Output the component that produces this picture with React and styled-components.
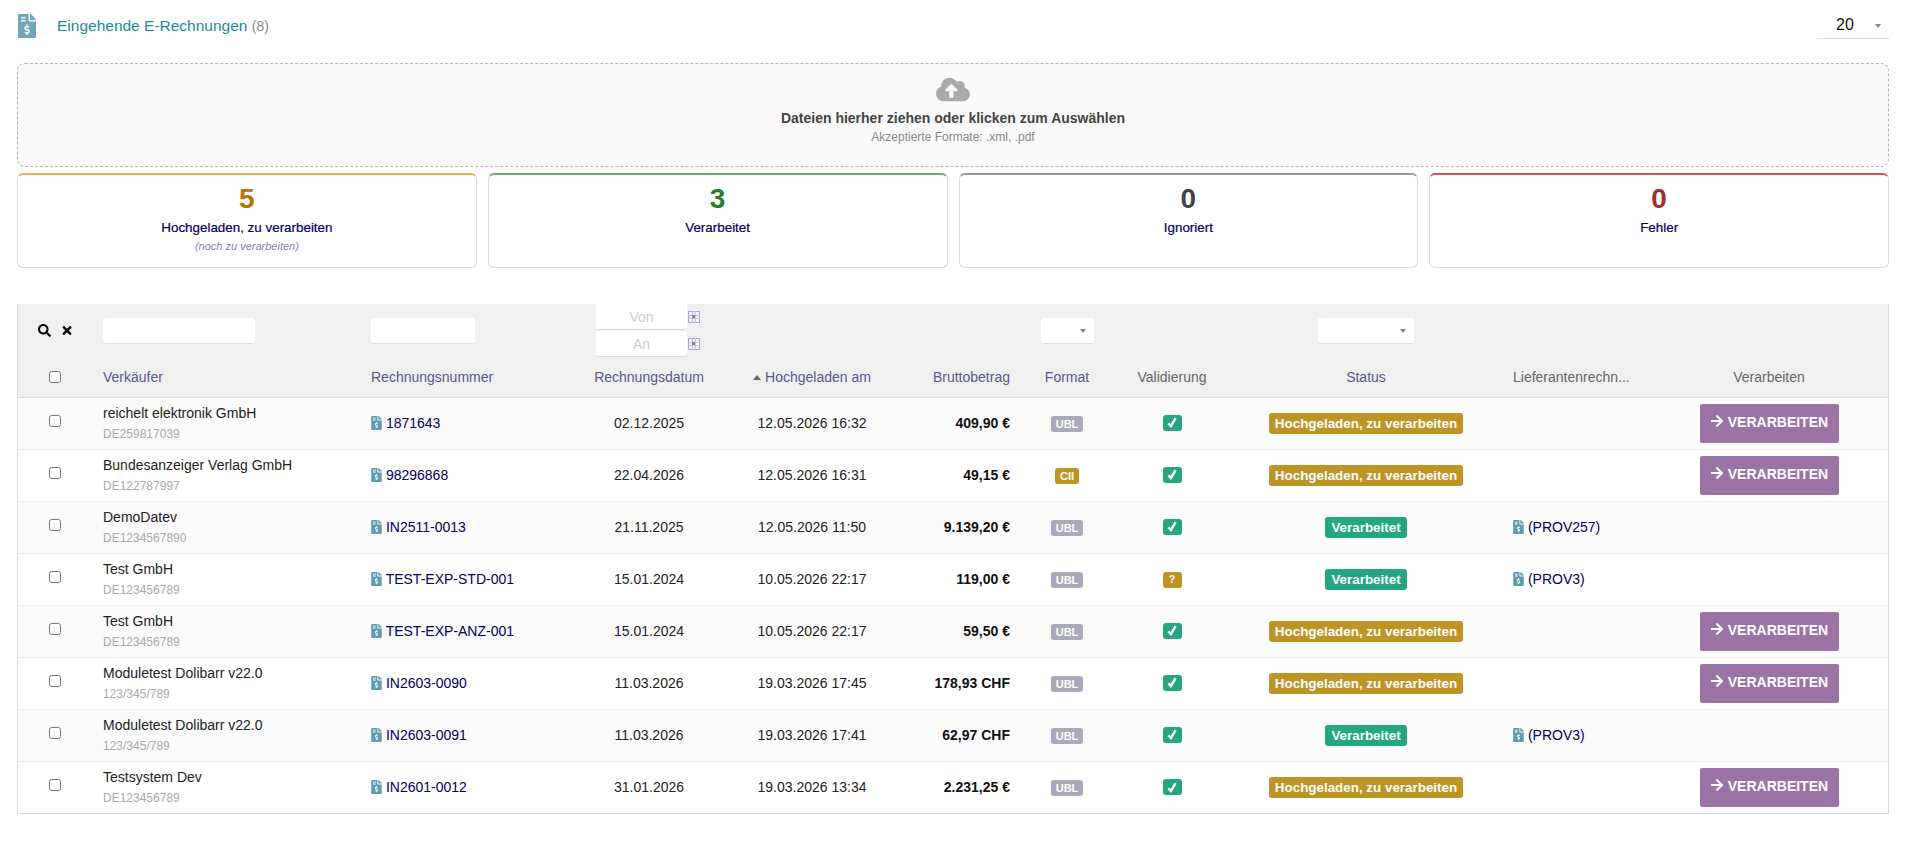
import React from 'react'
import styled, { createGlobalStyle } from 'styled-components'
import { FaFileInvoiceDollar, FaSearch, FaTimes, FaCloudUploadAlt, FaArrowRight } from 'react-icons/fa'

const GlobalStyle = createGlobalStyle`
    html, body {
        margin: 0;
        background: #fff;
        font-family: "Liberation Sans", Arial, sans-serif;
        font-size: 14px;
        color: #222;
    }
`

const columns = [74, 269, 225, 126, 200, 108, 94, 116, 272, 148, 238]

const invoices = [
    { seller: 'reichelt elektronik GmbH', vat: 'DE259817039', ref: '1871643', date: '02.12.2025', uploaded: '12.05.2026 16:32', amount: '409,90 €', format: 'UBL', valid: true, done: false },
    { seller: 'Bundesanzeiger Verlag GmbH', vat: 'DE122787997', ref: '98296868', date: '22.04.2026', uploaded: '12.05.2026 16:31', amount: '49,15 €', format: 'CII', valid: true, done: false },
    { seller: 'DemoDatev', vat: 'DE1234567890', ref: 'IN2511-0013', date: '21.11.2025', uploaded: '12.05.2026 11:50', amount: '9.139,20 €', format: 'UBL', valid: true, done: true, supplier: '(PROV257)' },
    { seller: 'Test GmbH', vat: 'DE123456789', ref: 'TEST-EXP-STD-001', date: '15.01.2024', uploaded: '10.05.2026 22:17', amount: '119,00 €', format: 'UBL', valid: false, done: true, supplier: '(PROV3)' },
    { seller: 'Test GmbH', vat: 'DE123456789', ref: 'TEST-EXP-ANZ-001', date: '15.01.2024', uploaded: '10.05.2026 22:17', amount: '59,50 €', format: 'UBL', valid: true, done: false },
    { seller: 'Moduletest Dolibarr v22.0', vat: '123/345/789', ref: 'IN2603-0090', date: '11.03.2026', uploaded: '19.03.2026 17:45', amount: '178,93 CHF', format: 'UBL', valid: true, done: false },
    { seller: 'Moduletest Dolibarr v22.0', vat: '123/345/789', ref: 'IN2603-0091', date: '11.03.2026', uploaded: '19.03.2026 17:41', amount: '62,97 CHF', format: 'UBL', valid: true, done: true, supplier: '(PROV3)' },
    { seller: 'Testsystem Dev', vat: 'DE123456789', ref: 'IN2601-0012', date: '31.01.2026', uploaded: '19.03.2026 13:34', amount: '2.231,25 €', format: 'UBL', valid: true, done: false },
]

const stats = [
    { value: 5, label: 'Hochgeladen, zu verarbeiten', note: '(noch zu verarbeiten)', edge: '#f0ad4e', color: '#b37400' },
    { value: 3, label: 'Verarbeitet', edge: '#5cb85c', color: '#2a7d2e' },
    { value: 0, label: 'Ignoriert', edge: '#999', color: '#444' },
    { value: 0, label: 'Fehler', edge: '#d9534f', color: '#a02c2c' },
]

function CalendarIcon() {
    return (
        <CalendarSvg viewBox="0 0 12 12">
            <rect x="0.5" y="0.5" width="11" height="11" fill="#f2f2f2" stroke="#a3a3e0" />
            <path d="M0 4.5h12M0 7.5h12M4.5 0v12M7.5 0v12" stroke="#c8c8c8" strokeWidth="1" />
            <rect x="4" y="4" width="3" height="3" fill="#a868bb" />
        </CalendarSvg>
    )
}

function CheckMark() {
    return (
        <CheckSvg viewBox="0 0 10 11">
            <path d="M1.4 6.4 L3.9 9 L8.6 1.2" fill="none" stroke="#fff" strokeWidth="2.4" />
        </CheckSvg>
    )
}

function Row({ item }) {
    return (
        <tr>
            <CheckCell><input type="checkbox" /></CheckCell>
            <Cell $pad="0 0 0 11px">
                <SellerName>{item.seller}</SellerName>
                <SellerVat>{item.vat}</SellerVat>
            </Cell>
            <Cell $pad="0 0 0 10px">
                <RefLink><DocIcon /> {item.ref}</RefLink>
            </Cell>
            <Cell $align="center">{item.date}</Cell>
            <Cell $align="center">{item.uploaded}</Cell>
            <Cell $align="right" $pad="0 10px 0 0"><Amount>{item.amount}</Amount></Cell>
            <Cell $align="center"><FormatBadge $format={item.format}>{item.format}</FormatBadge></Cell>
            <Cell $align="center">
                <CheckBadge $valid={item.valid}>{item.valid ? <CheckMark /> : '?'}</CheckBadge>
            </Cell>
            <Cell $align="center">
                <StatusBadge $done={item.done}>{item.done ? 'Verarbeitet' : 'Hochgeladen, zu verarbeiten'}</StatusBadge>
            </Cell>
            <Cell $pad="0 0 0 11px">
                {item.supplier && <RefLink><DocIcon /> {item.supplier}</RefLink>}
            </Cell>
            <Cell $align="center">
                {!item.done && <ProcessButton><FaArrowRight /> VERARBEITEN</ProcessButton>}
            </Cell>
        </tr>
    )
}

export default function App() {
    return (
        <Page>
            <GlobalStyle />
            <TitleBar>
                <TitleLeft>
                    <TitleIcon />
                    <Title>Eingehende E-Rechnungen <Count>(8)</Count></Title>
                </TitleLeft>
                <PageSize>20<Caret /></PageSize>
            </TitleBar>

            <DropZone>
                <CloudIcon />
                <DropTitle>Dateien hierher ziehen oder klicken zum Auswählen</DropTitle>
                <DropHint>Akzeptierte Formate: .xml, .pdf</DropHint>
            </DropZone>

            <StatGrid>
                {stats.map(s => (
                    <StatCard key={s.label} $edge={s.edge}>
                        <StatValue $color={s.color}>{s.value}</StatValue>
                        <StatLabel>{s.label}</StatLabel>
                        {s.note && <StatNote>{s.note}</StatNote>}
                    </StatCard>
                ))}
            </StatGrid>

            <TableWrap>
                <Table>
                    <colgroup>
                        {columns.map((w, i) => <Col key={i} $w={w} />)}
                    </colgroup>
                    <thead>
                        <FilterRow>
                            <th><SearchTools><FaSearch /><FaTimes /></SearchTools></th>
                            <FilterCell $pad="0 0 0 11px"><FilterInput $w={152} /></FilterCell>
                            <FilterCell $pad="0 0 0 10px"><FilterInput $w={104} /></FilterCell>
                            <FilterCell $pad="0 0 0 10px">
                                <DateStack>
                                    <DateLine><DateInput placeholder="Von" /><CalendarIcon /></DateLine>
                                    <DateLine><DateInput placeholder="An" /><CalendarIcon /></DateLine>
                                </DateStack>
                            </FilterCell>
                            <th />
                            <th />
                            <FilterCell><SelectBox $w={53}><Caret /></SelectBox></FilterCell>
                            <th />
                            <FilterCell><SelectBox $w={96}><Caret /></SelectBox></FilterCell>
                            <th />
                            <th />
                        </FilterRow>
                        <LabelRow>
                            <LabelCell $align="center"><input type="checkbox" /></LabelCell>
                            <LabelCell $pad="0 0 0 11px">Verkäufer</LabelCell>
                            <LabelCell $pad="0 0 0 10px">Rechnungsnummer</LabelCell>
                            <LabelCell $align="center">Rechnungsdatum</LabelCell>
                            <LabelCell $align="center"><SortArrow />Hochgeladen am</LabelCell>
                            <LabelCell $align="right" $pad="0 10px 0 0">Bruttobetrag</LabelCell>
                            <LabelCell $align="center">Format</LabelCell>
                            <LabelCell $align="center" $muted>Validierung</LabelCell>
                            <LabelCell $align="center">Status</LabelCell>
                            <LabelCell $pad="0 0 0 11px" $muted>Lieferantenrechn...</LabelCell>
                            <LabelCell $align="center" $muted>Verarbeiten</LabelCell>
                        </LabelRow>
                    </thead>
                    <Body>
                        {invoices.map(item => <Row key={item.ref} item={item} />)}
                    </Body>
                </Table>
            </TableWrap>
        </Page>
    )
}

const Page = styled.div`
    padding: 14px 20px 0 17px;
`
const TitleBar = styled.div`
    display: flex;
    justify-content: space-between;
    align-items: flex-start;
    height: 49px;
`
const TitleLeft = styled.div`
    display: flex;
    align-items: center;
    height: 24px;
`
const TitleIcon = styled(FaFileInvoiceDollar)`
    width: 18px;
    height: 24px;
    color: #6fa7b9;
    margin: 0 21px 0 1px;
`
const Title = styled.div`
    font-size: 15.5px;
    color: #1d8a98;
`
const Count = styled.span`
    color: #888;
    font-size: 14px;
`
const PageSize = styled.div`
    position: relative;
    box-sizing: border-box;
    width: 72px;
    height: 25px;
    padding: 2px 0 0 19px;
    font-size: 16px;
    color: #111;
    border-bottom: 1px solid #ddd;
    & > span { top: 10px; }
`
const Caret = styled.span`
    position: absolute;
    right: 8px;
    top: 11px;
    width: 0;
    height: 0;
    border-left: 3px solid transparent;
    border-right: 3px solid transparent;
    border-top: 4px solid #888;
`
const DropZone = styled.div`
    box-sizing: border-box;
    height: 104px;
    display: flex;
    flex-direction: column;
    align-items: center;
    background: #fafafa;
    border: 1px dashed #b5b5b5;
    border-radius: 8px;
    padding-top: 12px;
`
const CloudIcon = styled(FaCloudUploadAlt)`
    width: 34px;
    height: 27px;
    color: #aaa;
`
const DropTitle = styled.div`
    font-weight: bold;
    font-size: 14px;
    color: #444;
    margin-top: 7px;
`
const DropHint = styled.div`
    font-size: 12px;
    color: #888;
    margin-top: 4px;
`
const StatGrid = styled.div`
    display: grid;
    grid-template-columns: repeat(4, 1fr);
    gap: 11px;
    margin-top: 6px;
`
const StatCard = styled.div`
    box-sizing: border-box;
    height: 95px;
    display: flex;
    flex-direction: column;
    align-items: center;
    border: 1px solid #ddd;
    border-top: 2px solid ${p => p.$edge};
    border-radius: 6px;
    padding-top: 10px;
`
const StatValue = styled.div`
    font-size: 28px;
    font-weight: bold;
    line-height: 28px;
    color: ${p => p.$color};
`
const StatLabel = styled.div`
    font-size: 13.4px;
    color: #000060;
    margin-top: 7px;
    -webkit-text-stroke: 0.2px #000060;
`
const StatNote = styled.div`
    font-size: 11px;
    font-style: italic;
    color: #8585aa;
    margin-top: 5px;
`
const TableWrap = styled.div`
    margin-top: 36px;
    border-left: 1px solid #ddd;
    border-right: 1px solid #ddd;
    border-bottom: 1px solid #ddd;
`
const Table = styled.table`
    width: 100%;
    table-layout: fixed;
    border-collapse: collapse;
`
const Col = styled.col`
    width: ${p => p.$w}px;
`
const FilterRow = styled.tr`
    background: #f0f0f0;
    height: 53px;
    th { padding: 0; font-weight: normal; }
`
const FilterCell = styled.th`
    text-align: ${p => (p.$pad ? 'left' : 'center')};
    && { padding: ${p => p.$pad || '0'}; }
`
const SearchTools = styled.div`
    display: flex;
    justify-content: center;
    gap: 11px;
    align-items: center;
    color: #000;
    font-size: 13px;
    svg:last-child { width: 10px; }
`
const FilterInput = styled.input`
    display: block;
    box-sizing: border-box;
    width: ${p => p.$w}px;
    height: 26px;
    border: 0;
    border-bottom: 1px solid #ddd;
    border-radius: 3px;
    background: #fff;
`
const DateStack = styled.div`
    display: flex;
    flex-direction: column;
    gap: 1px;
`
const DateLine = styled.div`
    display: flex;
    align-items: center;
    gap: 1px;
`
const DateInput = styled.input`
    box-sizing: border-box;
    width: 91px;
    height: 26px;
    border: 0;
    border-bottom: 1px solid #ddd;
    border-radius: 3px;
    background: #fff;
    text-align: center;
    font-family: inherit;
    font-size: 14px;
    &::placeholder { color: #ccc; }
`
const CalendarSvg = styled.svg`
    width: 12px;
    height: 12px;
`
const SelectBox = styled.div`
    position: relative;
    display: inline-block;
    vertical-align: middle;
    box-sizing: border-box;
    width: ${p => p.$w}px;
    height: 26px;
    background: #fff;
    border-bottom: 1px solid #ddd;
    border-radius: 3px;
`
const LabelRow = styled.tr`
    background: #f0f0f0;
    height: 40px;
    border-bottom: 1px solid #ddd;
`
const LabelCell = styled.th`
    font-weight: normal;
    font-size: 14px;
    padding: ${p => p.$pad || '0'};
    text-align: ${p => p.$align || 'left'};
    color: ${p => (p.$muted ? '#666' : '#54598c')};
    white-space: nowrap;
    input { width: 12px; height: 12px; margin: 0 0 2px; vertical-align: middle; }
`
const SortArrow = styled.span`
    display: inline-block;
    width: 0;
    height: 0;
    margin: 0 4px 2px 0;
    border-left: 4px solid transparent;
    border-right: 4px solid transparent;
    border-bottom: 5px solid #666;
`
const Body = styled.tbody`
    tr {
        height: 52px;
        border-bottom: 1px solid #eee;
        background: #fff;
    }
    tr:nth-child(odd) { background: #fbfbfb; }
    tr:last-child { border-bottom: 0; }
`
const Cell = styled.td`
    padding: ${p => p.$pad || '0'};
    text-align: ${p => p.$align || 'left'};
    color: #222;
`
const CheckCell = styled.td`
    padding: 0;
    text-align: center;
    input { width: 12px; height: 12px; margin: 0 0 5px; vertical-align: middle; }
`
const SellerName = styled.div`
    line-height: 19px;
    color: #222;
`
const SellerVat = styled.div`
    font-size: 12px;
    line-height: 16px;
    margin-top: 3px;
    color: #aaa;
`
const RefLink = styled.span`
    color: #000060;
    white-space: nowrap;
`
const DocIcon = styled(FaFileInvoiceDollar)`
    width: 11px;
    height: 14px;
    color: #5c9bb0;
    vertical-align: -2px;
`
const Amount = styled.b`
    color: #111;
`
const FormatBadge = styled.span`
    display: inline-block;
    box-sizing: border-box;
    height: 16px;
    line-height: 16px;
    padding: 0 5px;
    border-radius: 3px;
    font-size: 11px;
    font-weight: bold;
    color: #fff;
    background: ${p => (p.$format === 'CII' ? '#bc9526' : '#a9a9bb')};
`
const CheckBadge = styled.span`
    display: inline-flex;
    align-items: center;
    justify-content: center;
    width: 19px;
    height: 16px;
    border-radius: 3px;
    font-size: 10px;
    font-weight: bold;
    color: #fff;
    background: ${p => (p.$valid ? '#25a580' : '#bc9526')};
`
const CheckSvg = styled.svg`
    width: 10px;
    height: 11px;
`
const StatusBadge = styled.span`
    display: inline-block;
    height: 21px;
    line-height: 21px;
    padding: 0 6px;
    border-radius: 3px;
    font-size: 13.4px;
    font-weight: bold;
    color: #fff;
    background: ${p => (p.$done ? '#25a580' : '#bc9526')};
`
const ProcessButton = styled.button`
    box-sizing: border-box;
    display: inline-block;
    vertical-align: middle;
    width: 139px;
    height: 39px;
    margin: 0;
    border: 0;
    border-radius: 2px;
    background: #9b74a5;
    color: #fff;
    font-family: inherit;
    font-size: 14px;
    font-weight: bold;
    padding: 0 0 3px;
    svg { vertical-align: -1px; font-size: 14px; }
`
